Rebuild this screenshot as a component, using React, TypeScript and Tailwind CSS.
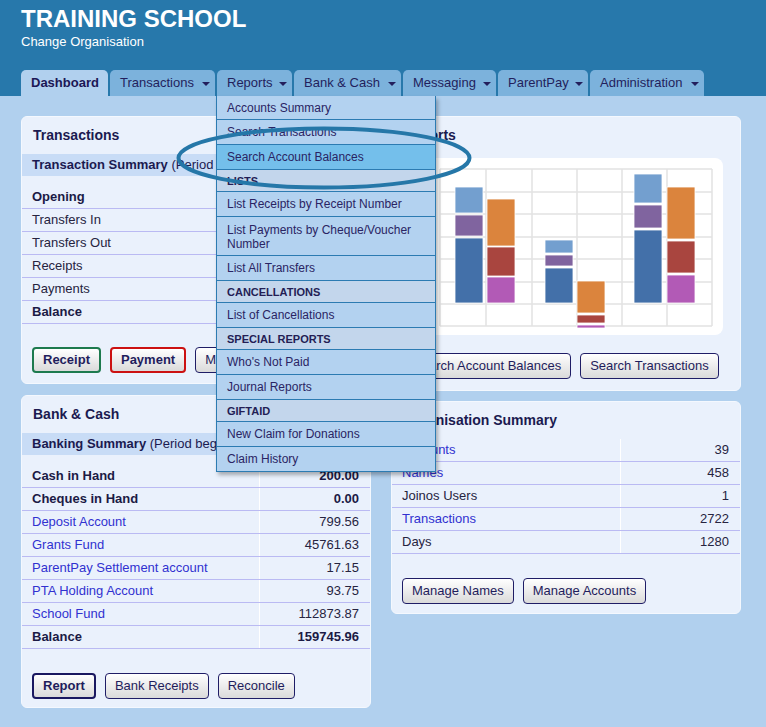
import React from "react";

type Tab = { label: string; w: string; active?: boolean };

const tabs: Tab[] = [
  { label: "Dashboard", w: "w-[87px]", active: true },
  { label: "Transactions", w: "w-[105px]" },
  { label: "Reports", w: "w-[75px]" },
  { label: "Bank & Cash", w: "w-[107px]" },
  { label: "Messaging", w: "w-[93px]" },
  { label: "ParentPay", w: "w-[90px]" },
  { label: "Administration", w: "w-[114px]" },
];

type MenuKind = "first" | "item" | "active" | "head" | "double";

const menu: [string, MenuKind][] = [
  ["Accounts Summary", "first"],
  ["Search Transactions", "item"],
  ["Search Account Balances", "active"],
  ["LISTS", "head"],
  ["List Receipts by Receipt Number", "item"],
  ["List Payments by Cheque/Voucher Number", "double"],
  ["List All Transfers", "item"],
  ["CANCELLATIONS", "head"],
  ["List of Cancellations", "item"],
  ["SPECIAL REPORTS", "head"],
  ["Who's Not Paid", "item"],
  ["Journal Reports", "item"],
  ["GIFTAID", "head"],
  ["New Claim for Donations", "item"],
  ["Claim History", "item"],
];

const menuClass: Record<MenuKind, string> = {
  first: "h-[24px] pt-[1px] bg-[#b3d2f0] text-[12px] leading-[22px] text-[#2a2463]",
  item: "h-[25px] pt-[1px] bg-[#b3d2f0] text-[12px] leading-[23px] text-[#2a2463]",
  active: "h-[25px] pt-[1px] bg-[#74bfeb] text-[12px] leading-[23px] text-[#2a2463]",
  head: "h-[22px] pt-[1px] bg-[#c3d6ec] text-[11px] font-bold leading-[20px] text-[#231e55]",
  double: "h-[39px] pt-[6px] pr-[20px] bg-[#b3d2f0] text-[12px] leading-[14px] text-[#2a2463]",
};

type Row = { label: string; value: string; kind?: "bold" | "link" };

const txRows: Row[] = [
  { label: "Opening", value: "158901.21", kind: "bold" },
  { label: "Transfers In", value: "0.00" },
  { label: "Transfers Out", value: "0.00" },
  { label: "Receipts", value: "2310.50" },
  { label: "Payments", value: "1465.75" },
  { label: "Balance", value: "159745.96", kind: "bold" },
];

const bankRows: Row[] = [
  { label: "Cash in Hand", value: "200.00", kind: "bold" },
  { label: "Cheques in Hand", value: "0.00", kind: "bold" },
  { label: "Deposit Account", value: "799.56", kind: "link" },
  { label: "Grants Fund", value: "45761.63", kind: "link" },
  { label: "ParentPay Settlement account", value: "17.15", kind: "link" },
  { label: "PTA Holding Account", value: "93.75", kind: "link" },
  { label: "School Fund", value: "112873.87", kind: "link" },
  { label: "Balance", value: "159745.96", kind: "bold" },
];

const orgRows: Row[] = [
  { label: "Accounts", value: "39", kind: "link" },
  { label: "Names", value: "458", kind: "link" },
  { label: "Joinos Users", value: "1" },
  { label: "Transactions", value: "2722", kind: "link" },
  { label: "Days", value: "1280" },
];

// chart bars in box coords: x, then [y, h, colour] segments
const bars: [number, [number, number, string][]][] = [
  [46, [[29, 26, "#739fcf"], [57, 21, "#80649f"], [80, 65, "#4370a9"]]],
  [78, [[41, 47, "#db843d"], [89, 29, "#a9453f"], [119, 26, "#b25ab6"]]],
  [136, [[82, 13, "#739fcf"], [97, 11, "#80649f"], [110, 35, "#4370a9"]]],
  [168, [[123, 32, "#db843d"], [157, 8, "#a9453f"], [167, 3, "#b25ab6"]]],
  [225, [[16, 29, "#739fcf"], [47, 23, "#80649f"], [72, 73, "#4370a9"]]],
  [258, [[29, 52, "#db843d"], [83, 32, "#a9453f"], [117, 28, "#b25ab6"]]],
];

const gridX = [31, 77, 123, 168, 213, 258, 303];
const gridY = [11, 34, 56, 79, 101, 124, 146, 168];

function Panel({ className = "", children }: { className?: string; children: React.ReactNode }) {
  return (
    <div className={`w-[350px] rounded-[6px] border border-[#f4f8fe] bg-[#eaf1fc] pt-[10px] ${className}`}>
      {children}
    </div>
  );
}

function Title({ children }: { children: React.ReactNode }) {
  return <div className="px-[11px] text-[14px] font-bold leading-[17px] text-[#1b1a50]">{children}</div>;
}

function Band({ bold, rest }: { bold: string; rest: string }) {
  return (
    <div className="mt-[10px] h-[22px] overflow-hidden whitespace-nowrap bg-[#c8dcf6] px-[10px] text-[13px] leading-[22px] text-[#1b1a50]">
      <span className="font-bold">{bold}</span> {rest}
    </div>
  );
}

function Table({ rows, cols, className = "" }: { rows: Row[]; cols: string; className?: string }) {
  return (
    <div className={className}>
      {rows.map((r) => (
        <div key={r.label} className={`grid ${cols} h-[23px] border-b border-[#babaf3] text-[13px] leading-[22px]`}>
          <div
            className={`border-r border-white pl-[10px] ${
              r.kind === "bold" ? "font-bold text-[#1b1a45]" : r.kind === "link" ? "text-[#3131d0]" : "text-[#26243f]"
            }`}
          >
            {r.label}
          </div>
          <div className={`pr-[11px] text-right ${r.kind === "bold" ? "font-bold text-[#1b1a45]" : "text-[#26243f]"}`}>
            {r.value}
          </div>
        </div>
      ))}
    </div>
  );
}

function Btn({ children, tone }: { children: React.ReactNode; tone?: "green" | "red" | "navy" }) {
  const border =
    tone === "green"
      ? "border-2 border-[#1d7a4e] font-bold"
      : tone === "red"
        ? "border-2 border-[#cc1111] font-bold"
        : tone === "navy"
          ? "border-2 border-[#1a1860] font-bold"
          : "border border-[#1f1d66]";
  return (
    <button
      className={`h-[26px] whitespace-nowrap rounded-[4px] bg-linear-to-b from-white to-[#dadada] px-[9px] text-[13px] leading-[22px] text-[#1f1d5c] ${border}`}
    >
      {children}
    </button>
  );
}

export default function App() {
  return (
    <div className="relative min-h-[727px] w-full bg-[#b1d0ee] font-['Liberation_Sans',Arial,sans-serif]">
      {/* header */}
      <div className="h-[96px] bg-[#2778ab] px-[21px] pt-[5px] text-white">
        <div className="text-[24px] font-bold leading-[28px]">TRAINING SCHOOL</div>
        <div className="mt-[1px] text-[13px] leading-[16px]">Change Organisation</div>
        <div className="mt-[20px] flex gap-[2px]">
          {tabs.map((t) => (
            <div
              key={t.label}
              className={`${t.w} flex h-[26px] items-center justify-between rounded-t-[5px] pl-[10px] pr-[5px] text-[13px] leading-[24px] ${
                t.active ? "bg-[#b1d0ee] font-bold text-[#1c1755]" : "bg-[#7cb2dc] text-[#231f5c]"
              }`}
            >
              <span>{t.label}</span>
              {!t.active && (
                <span className="mt-[2px] border-x-[4px] border-t-[4px] border-x-transparent border-t-[#231f5c]" />
              )}
            </div>
          ))}
        </div>
      </div>

      {/* content */}
      <div className="flex gap-[20px] pl-[21px] pt-[20px]">
        <div className="flex flex-col gap-[11px]">
          <Panel className="pb-[10px]">
            <Title>Transactions</Title>
            <Band bold="Transaction Summary" rest="(Period beginning 01/09/2015)" />
            <Table rows={txRows} cols="grid-cols-[238px_1fr]" className="mt-[10px]" />
            <div className="mt-[23px] flex gap-[9px] px-[10px]">
              <Btn tone="green">Receipt</Btn>
              <Btn tone="red">Payment</Btn>
              <Btn>Move</Btn>
            </div>
          </Panel>

          <Panel className="pb-[8px]">
            <Title>Bank &amp; Cash</Title>
            <Band bold="Banking Summary" rest="(Period beginning 01/09/2015)" />
            <Table rows={bankRows} cols="grid-cols-[238px_1fr]" className="mt-[10px]" />
            <div className="mt-[24px] flex gap-[9px] px-[10px]">
              <Btn tone="navy">Report</Btn>
              <Btn>Bank Receipts</Btn>
              <Btn>Reconcile</Btn>
            </div>
          </Panel>
        </div>

        <div className="flex flex-col gap-[10px]">
          <Panel className="pb-[11px]">
            <Title>Reports</Title>
            <div className="ml-[17px] mt-[14px] h-[177px] w-[314px] rounded-[8px] bg-white">
              <svg width="314" height="177" viewBox="0 0 314 177">
                {gridX.map((x) => (
                  <line key={`x${x}`} x1={x} y1={11} x2={x} y2={168} stroke="#e2e2e2" strokeWidth="1.5" />
                ))}
                {gridY.map((y) => (
                  <line key={`y${y}`} x1={31} y1={y} x2={303} y2={y} stroke="#e2e2e2" strokeWidth="1.5" />
                ))}
                {bars.map(([x, segs]) =>
                  segs.map(([y, h, c]) => (
                    <rect key={`${x}-${y}`} x={x} y={y} width={28} height={h} fill={c} stroke="#ffffff" strokeWidth="0.8" />
                  )),
                )}
              </svg>
            </div>
            <div className="mt-[18px] flex gap-[9px] px-[11px]">
              <Btn>Search Account Balances</Btn>
              <Btn>Search Transactions</Btn>
            </div>
          </Panel>

          <Panel className="pb-[9px]">
            <Title>Organisation Summary</Title>
            <Table rows={orgRows} cols="grid-cols-[229px_1fr]" className="mt-[10px]" />
            <div className="mt-[24px] flex gap-[9px] px-[10px]">
              <Btn>Manage Names</Btn>
              <Btn>Manage Accounts</Btn>
            </div>
          </Panel>
        </div>
      </div>

      {/* reports dropdown */}
      <div className="absolute left-[216px] top-[96px] w-[220px] border-x border-[#2c7bb2] shadow-[2px_3px_4px_rgba(0,0,0,0.3)]">
        {menu.map(([label, kind]) => (
          <div key={label} className={`border-b border-[#2c7bb2] pl-[10px] ${menuClass[kind]}`}>
            {label}
          </div>
        ))}
      </div>

      {/* annotation ring */}
      <svg className="pointer-events-none absolute left-0 top-0" width="766" height="727">
        <ellipse cx="324" cy="158" rx="145.5" ry="29.5" fill="none" stroke="#2577a8" strokeWidth="4" />
      </svg>
    </div>
  );
}
